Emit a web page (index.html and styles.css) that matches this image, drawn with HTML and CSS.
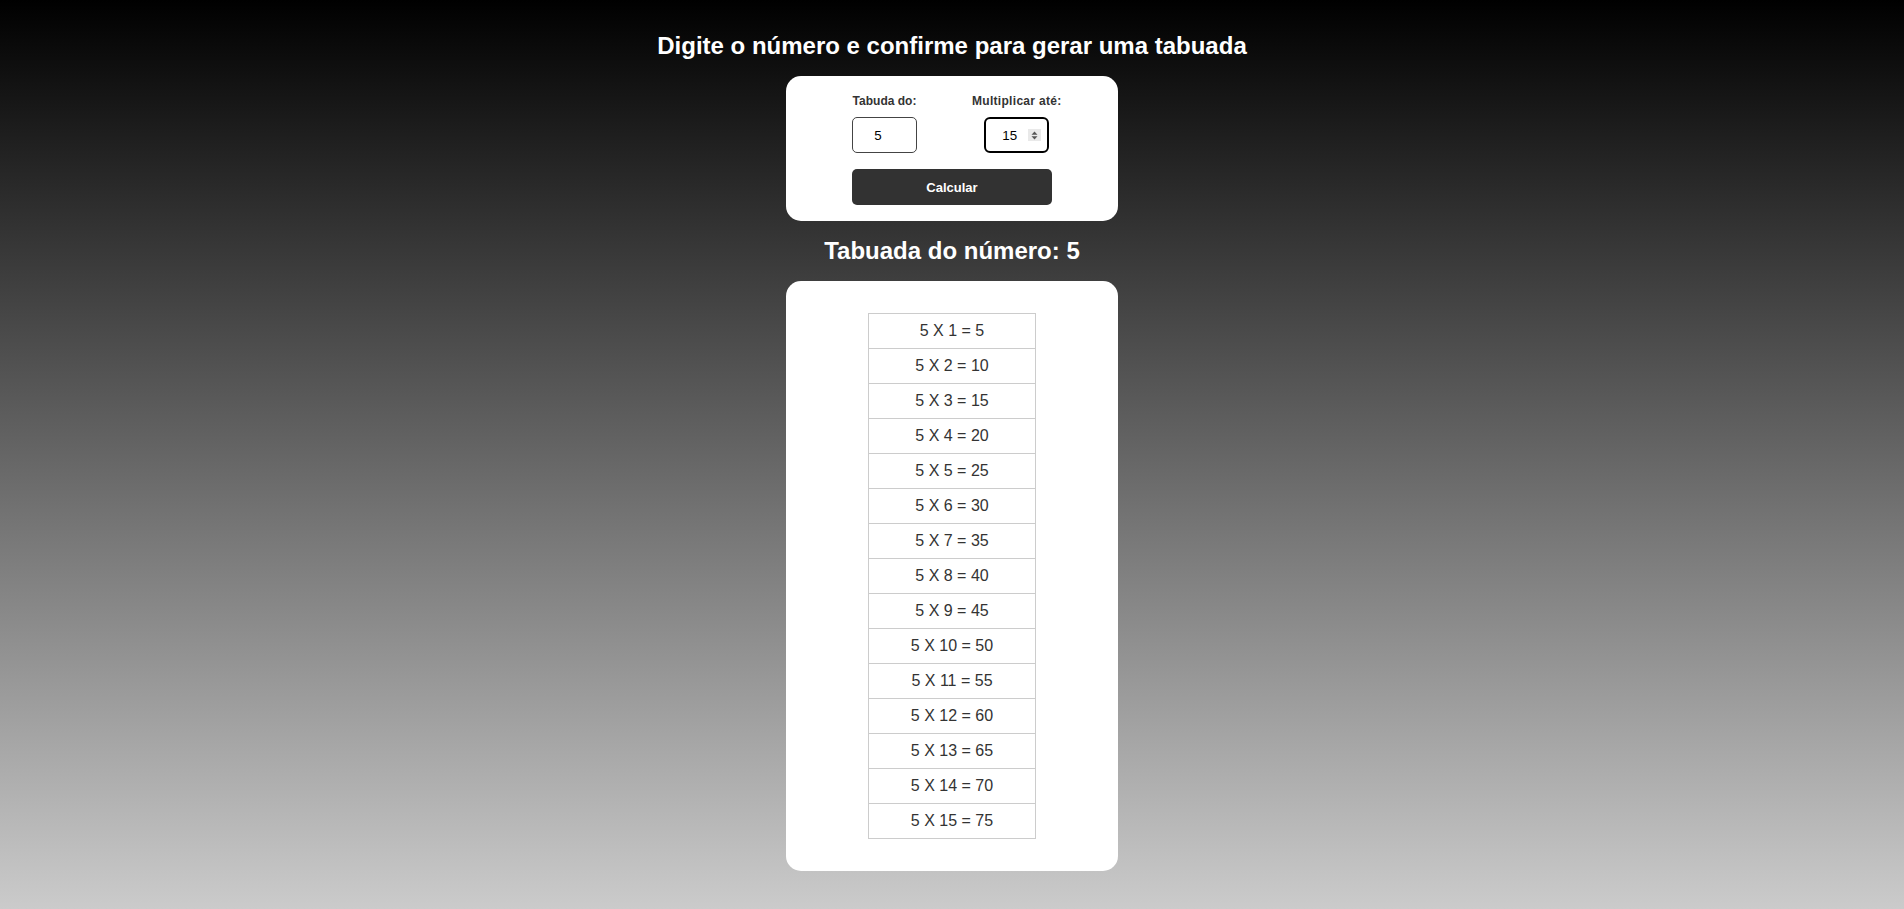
FILE: index.html
```html
<!DOCTYPE html>
<html lang="pt-BR">
<head>
<meta charset="utf-8">
<title>Tabuada</title>
<link rel="stylesheet" href="styles.css">
</head>
<body>
<main class="page">
  <h1 class="title">Digite o número e confirme para gerar uma tabuada</h1>
  <section class="card form-card">
    <div class="form-body">
      <div class="row">
        <div class="group">
          <label class="label" for="num">Tabuda do:</label>
          <div class="field">
            <input class="num" id="num" type="text" value="5">
            <span class="spin hidden"></span>
          </div>
        </div>
        <div class="group">
          <label class="label label-wide" for="ate">Multiplicar até:</label>
          <div class="field focused">
            <input class="num" id="ate" type="text" value="15">
            <span class="spin">
              <svg width="7" height="9" viewBox="0 0 7 9"><path d="M3.5 0.5 L6.5 3.8 H0.5 Z M3.5 8.5 L6.5 5.2 H0.5 Z" fill="#555"/></svg>
            </span>
          </div>
        </div>
      </div>
      <button class="btn" type="button">Calcular</button>
    </div>
  </section>
  <h2 class="subtitle">Tabuada do número: 5</h2>
  <section class="card result-card">
    <table class="table">
      <tbody>
        <tr><td>5 X 1 = 5</td></tr>
        <tr><td>5 X 2 = 10</td></tr>
        <tr><td>5 X 3 = 15</td></tr>
        <tr><td>5 X 4 = 20</td></tr>
        <tr><td>5 X 5 = 25</td></tr>
        <tr><td>5 X 6 = 30</td></tr>
        <tr><td>5 X 7 = 35</td></tr>
        <tr><td>5 X 8 = 40</td></tr>
        <tr><td>5 X 9 = 45</td></tr>
        <tr><td>5 X 10 = 50</td></tr>
        <tr><td>5 X 11 = 55</td></tr>
        <tr><td>5 X 12 = 60</td></tr>
        <tr><td>5 X 13 = 65</td></tr>
        <tr><td>5 X 14 = 70</td></tr>
        <tr><td>5 X 15 = 75</td></tr>
      </tbody>
    </table>
  </section>
</main>
</body>
</html>
```
FILE: styles.css
```css
html {
  margin: 0;
  padding: 0;
}
body {
  margin: 0;
  min-height: 100vh;
  background: linear-gradient(to bottom, #000000 0%, #cbcbcb 100%);
  font-family: "Liberation Sans", Arial, sans-serif;
}
.page {
  display: flex;
  flex-direction: column;
  align-items: center;
  padding-top: 32px;
}
.title,
.subtitle {
  margin: 0 0 16px;
  color: #ffffff;
  font-size: 24px;
  font-weight: bold;
  line-height: normal;
}
.card {
  background: #ffffff;
  border-radius: 15px;
  width: 332px;
}
.form-card {
  padding: 18px 0 16px;
  margin-bottom: 16px;
}
.form-body {
  width: 200px;
  margin: 0 auto;
}
.row {
  display: flex;
  gap: 55px;
}
.group {
  display: flex;
  flex-direction: column;
  align-items: center;
  flex: none;
}
.label {
  font-size: 12px;
  font-weight: bold;
  color: #333333;
  line-height: 14px;
  margin-bottom: 9px;
  white-space: nowrap;
}
.label-wide {
  letter-spacing: 0.3px;
}
.field {
  width: 65px;
  height: 36px;
  box-sizing: border-box;
  border: 1px solid #444444;
  border-radius: 5px;
  display: flex;
  align-items: center;
  padding: 0 6px;
  background: #ffffff;
}
.field.focused {
  border: 2px solid #000000;
  border-radius: 6px;
  padding: 0 6px 0 5px;
}
.num {
  flex: 1;
  min-width: 0;
  width: 0;
  border: 0;
  padding: 0;
  margin: 0;
  outline: none;
  background: transparent;
  text-align: center;
  font-family: "Liberation Sans", Arial, sans-serif;
  font-size: 13.33px;
  color: #000000;
}
.spin {
  width: 13px;
  height: 12px;
  flex: none;
  background: #e9e9e9;
  display: flex;
  align-items: center;
  justify-content: center;
}
.spin.hidden {
  visibility: hidden;
}
.btn {
  display: flex;
  align-items: center;
  justify-content: center;
  width: 200px;
  height: 36px;
  margin-top: 16px;
  border: 0;
  border-radius: 5px;
  background: #323232;
  color: #ffffff;
  font-family: "Liberation Sans", Arial, sans-serif;
  font-size: 13px;
  font-weight: bold;
  padding: 0;
}
.result-card {
  padding: 32px 0;
}
.table {
  border-collapse: collapse;
  width: 168px;
  margin: 0 auto;
}
.table td {
  border: 1px solid #cccccc;
  padding: 8px 0;
  line-height: 18px;
  font-size: 16px;
  color: #333333;
  text-align: center;
}
```
